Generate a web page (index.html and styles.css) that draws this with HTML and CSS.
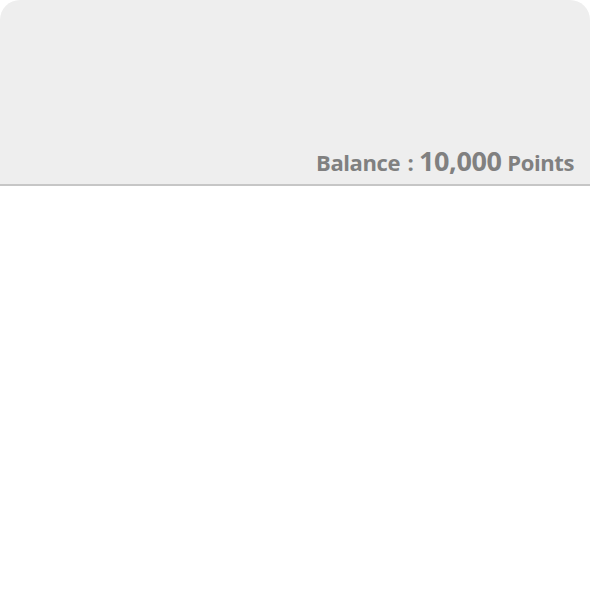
FILE: index.html
```html
<!DOCTYPE html>
<html>
<head>
<meta charset="utf-8">
<link rel="stylesheet" href="styles.css">
</head>
<body>
<div class="header">
  <div class="balance"><span class="label">Balance :</span> <span class="amount">10,000</span> <span class="label">Points</span></div>
</div>
</body>
</html>
```
FILE: styles.css
```css
html, body {
  margin: 0;
  padding: 0;
  background: #ffffff;
}
.header {
  box-sizing: border-box;
  background: #eeeeee;
  border-bottom: 2px solid #c6c6c6;
  border-radius: 20px 20px 0 0;
  height: 186px;
  display: flex;
  justify-content: flex-end;
  align-items: flex-end;
  padding: 0 16px 10px 0;
}
.balance {
  font-family: "Open Sans", sans-serif;
  font-weight: 700;
  color: #808080;
  line-height: 1;
  letter-spacing: -0.4px;
  word-spacing: 2px;
  white-space: nowrap;
}
.label {
  font-size: 22px;
}
.amount {
  font-size: 27px;
}
```
